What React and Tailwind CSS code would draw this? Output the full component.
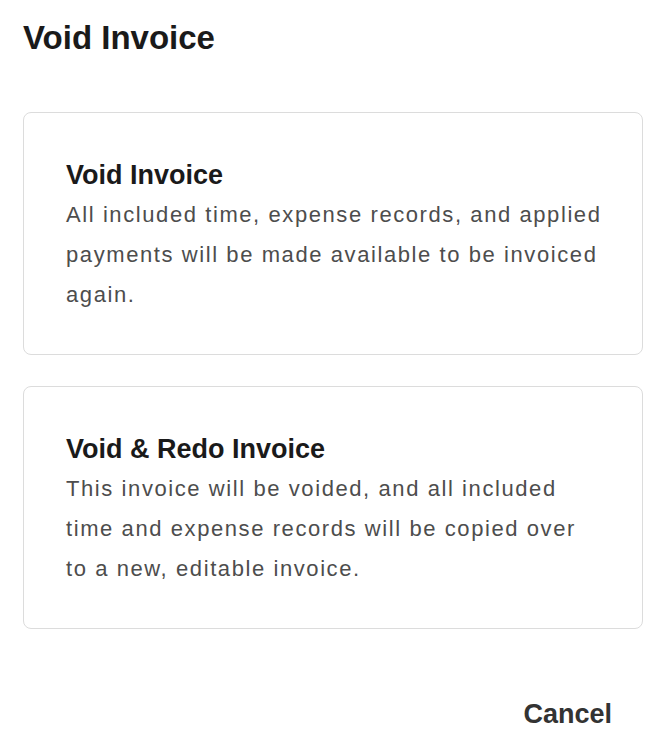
import React from "react";

const options = [
  {
    title: "Void Invoice",
    lines: [
      "All included time, expense records, and applied",
      "payments will be made available to be invoiced",
      "again.",
    ],
  },
  {
    title: "Void & Redo Invoice",
    lines: [
      "This invoice will be voided, and all included",
      "time and expense records will be copied over",
      "to a new, editable invoice.",
    ],
  },
];

const App = () => {
  return (
    <div
      className="bg-white min-h-screen w-[664px] px-[23px] pt-[18px]"
      style={{ fontFamily: '"Liberation Sans", Arial, sans-serif' }}>
      <h1 className="text-[33px] leading-[40px] font-bold text-[#1a1a1a]">
        Void Invoice
      </h1>

      <div className="mt-[54px] flex flex-col gap-[31px]">
        {options.map((o) => (
          <div
            key={o.title}
            role="button"
            className="cursor-pointer w-[620px] h-[243px] border border-[#dcdcdc] rounded-[8px] pl-[42px] pr-6 pt-[46px]">
            <div className="text-[27px] leading-[32px] font-bold text-[#1a1a1a]">
              {o.title}
            </div>
            <div className="mt-[4px] text-[22px] leading-[40px] tracking-[0.072em] text-[#4d4d4d]">
              {o.lines.map((l) => (
                <div key={l}>{l}</div>
              ))}
            </div>
          </div>
        ))}
      </div>

      <div className="flex justify-end pr-[29px] mt-[69px]">
        <button
          type="button"
          className="text-[27px] leading-[32px] font-bold text-[#333333]">
          Cancel
        </button>
      </div>
    </div>
  );
};

export default App;
